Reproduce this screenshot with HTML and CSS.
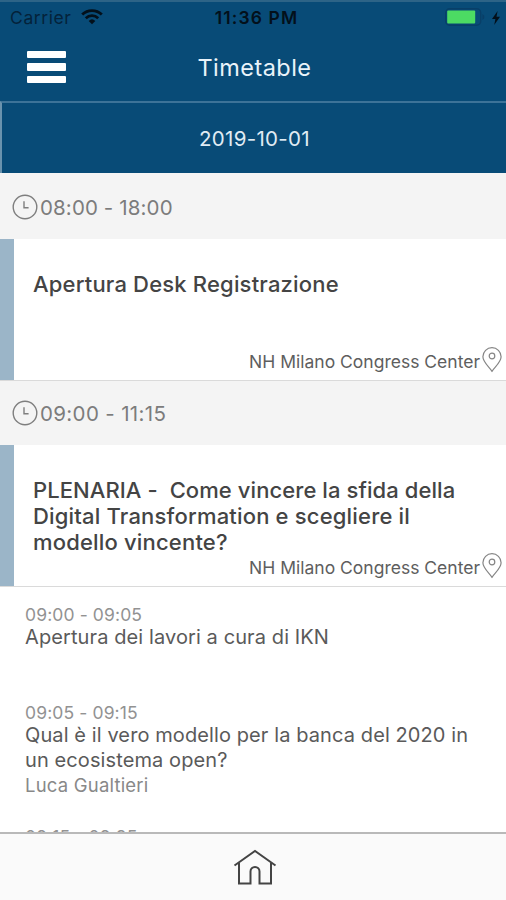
FILE: index.html
```html
<!DOCTYPE html>
<html lang="it">
<head>
<meta charset="utf-8">
<title>Timetable</title>
<link rel="stylesheet" href="styles.css">
</head>
<body>
<div class="app">
  <header class="top">
    <div class="status">
      <div class="carrier"><span class="carrier-name">Carrier</span>
        <svg class="wifi" viewBox="0 0 24 17"><path d="M2.2 6.6a14 14 0 0 1 19.6 0M5.8 10.2a9 9 0 0 1 12.4 0" fill="none" stroke="#03101b" stroke-width="2.8"/><path d="M12 16.3l-3.3-3.4a4.8 4.8 0 0 1 6.6 0z" fill="#03101b"/></svg>
      </div>
      <span class="clock">11:36 PM</span>
      <div class="power">
        <svg class="battery" viewBox="0 0 40 18"><rect x=".7" y=".7" width="35" height="16.6" rx="4" fill="none" stroke="#083f68" stroke-width="1.4"/><path d="M37.4 6v6q2-1 2-3t-2-3z" fill="#083f68"/><rect x="2.2" y="2.6" width="28" height="12.8" rx="1" fill="#4cdb63"/></svg>
        <svg class="bolt" viewBox="0 0 8 14"><path d="M5.6 0L0 8h3.4L2.2 14 8 5.8H4.5z" fill="#03101b"/></svg>
      </div>
    </div>
    <div class="nav">
      <div class="menu"><i></i><i></i><i></i></div>
      <h1 class="title">Timetable</h1>
    </div>
  </header>
  <div class="date"><span>2019-10-01</span></div>
  <main class="list">
    <div class="slot">
      <svg class="icon-clock" viewBox="0 0 26 26"><circle cx="13" cy="13" r="11.8"/><path d="M12 7.2v6.6h4.6"/></svg>
      <span class="slot-time">08:00 - 18:00</span>
    </div>
    <section class="card">
      <h2 class="card-title"><span>Apertura Desk Registrazione</span></h2>
      <div class="place"><span>NH Milano Congress Center</span>
        <svg class="pin" viewBox="0 0 20 26"><path d="M10 24.3C7 20 .9 15 .9 9.8a9.1 9.1 0 0 1 18.2 0C19.1 15 13 20 10 24.3z"/><circle cx="10" cy="9" r="2.8"/></svg>
      </div>
    </section>
    <div class="slot">
      <svg class="icon-clock" viewBox="0 0 26 26"><circle cx="13" cy="13" r="11.8"/><path d="M12 7.2v6.6h4.6"/></svg>
      <span class="slot-time slot-time-wide">09:00 - 11:15</span>
    </div>
    <section class="card">
      <h2 class="card-title"><span class="tight">PLENARIA -&nbsp; Come vincere la sfida della</span><br><span>Digital Transformation e scegliere il</span><br><span>modello vincente?</span></h2>
      <div class="place"><span>NH Milano Congress Center</span>
        <svg class="pin" viewBox="0 0 20 26"><path d="M10 24.3C7 20 .9 15 .9 9.8a9.1 9.1 0 0 1 18.2 0C19.1 15 13 20 10 24.3z"/><circle cx="10" cy="9" r="2.8"/></svg>
      </div>
    </section>
    <article class="talk talk-short">
      <div class="talk-time"><span>09:00 - 09:05</span></div>
      <div class="talk-title"><span>Apertura dei lavori a cura di IKN</span></div>
    </article>
    <article class="talk talk-long">
      <div class="talk-time"><span>09:05 - 09:15</span></div>
      <div class="talk-title"><span>Qual è il vero modello per la banca del 2020 in</span><br><span>un ecosistema open?</span></div>
      <div class="speaker"><span>Luca Gualtieri</span></div>
    </article>
    <article class="talk">
      <div class="talk-time"><span>09:15 - 09:25</span></div>
    </article>
  </main>
  <footer class="tabs">
    <svg class="home" viewBox="0 0 44 38"><path d="M1.5 16.5L22 2l20.5 14.5M6 14v20.5h11.5V22.500a4.500 4.500 0 0 1 9 0V34.500H38V14"/></svg>
  </footer>
</div>
</body>
</html>
```
FILE: styles.css
```css
* { box-sizing: border-box; }
body { margin: 0; font-family: Inter, "Liberation Sans", sans-serif; background: #fff; }
.app { width: 506px; height: 900px; display: flex; flex-direction: column; overflow: hidden; white-space: nowrap; }
.top { height: 101px; flex: none; background: #084b77; border-top: 2px solid #2d6487; }
.status { height: 31px; display: grid; grid-template-columns: 1fr auto 1fr; align-items: center; padding: 0 6px 0 10px; color: #03101b; }
.carrier { display: flex; align-items: center; gap: 8px; font-size: 17.5px; letter-spacing: .6px; color: #04223a; }
.wifi { width: 24px; height: 17px; margin-top: -2px; }
.clock { font-size: 17.5px; font-weight: 600; letter-spacing: 1.1px; margin-left: 3px; }
.power { display: flex; justify-content: flex-end; align-items: center; gap: 6px; }
.battery { width: 40px; height: 18px; margin-right: 1px; margin-top: -1px; }
.bolt { width: 8px; height: 14px; }
.nav { height: 68px; display: grid; grid-template-columns: 1fr auto 1fr; align-items: center; padding: 0 24px 0 27px; }
.menu { width: 39px; display: flex; flex-direction: column; gap: 5px; }
.menu i { height: 7.5px; background: #fff; border-radius: 1px; }
.title { margin: 0; font-size: 23.5px; font-weight: 400; letter-spacing: .45px; color: #e9f3fa; }
.date { height: 72px; flex: none; display: flex; align-items: center; justify-content: center; background: #084b77; border-top: 2px solid #3d7398; border-left: 2px solid #6a93ae; color: #e0ecf4; font-size: 20.5px; letter-spacing: .3px; padding-left: 1px; }
.list { flex: 1; min-height: 0; overflow: hidden; }
.slot { height: 65px; display: flex; align-items: center; gap: 2px; padding: 1px 0 0 12px; background: #f4f4f4; color: #7c7c7c; }
.slot:first-child { height: 66px; padding-top: 2px; }
.icon-clock { width: 26px; height: 26px; fill: none; stroke: #7e7e7e; stroke-width: 1.4; }
.slot-time { font-size: 20.5px; letter-spacing: .12px; }
.slot-time-wide { letter-spacing: .35px; }
.card { height: 141px; display: flex; flex-direction: column; justify-content: space-between; border-left: 14px solid #9bb5c8; padding: 32px 4px 7px 19px; box-shadow: 0 1px #dadada; position: relative; }
.card-title { margin: 0; font-size: 22px; line-height: 26px; font-weight: 550; letter-spacing: .18px; color: #444; }
.card-title .tight { letter-spacing: .08px; }
.place { display: flex; justify-content: flex-end; align-items: center; gap: 2px; height: 26px; font-size: 17.5px; color: #5e5e5e; margin-top: -7px; }
.place span { padding-top: 2px; }
.pin { width: 20px; height: 26px; fill: none; stroke: #858585; stroke-width: 1.2; }
.talk { padding: 18px 24px 0 25px; }
.talk-short { height: 98px; }
.talk-long { height: 124px; }
.talk-time { font-size: 17.5px; line-height: 22px; color: #929292; letter-spacing: .12px; }
.talk-title { font-size: 20px; line-height: 25px; color: #5a5a5a; letter-spacing: .1px; margin-top: -1px; }
.speaker { font-size: 18.5px; line-height: 25px; color: #888; letter-spacing: .2px; }
.tabs { height: 68px; flex: none; display: flex; justify-content: center; align-items: center; background: #fafafa; border-top: 2px solid #b9b9b9; padding: 2px 0 0 3px; }
.home { width: 44px; height: 38px; fill: none; stroke: #444; stroke-width: 2; }
```
